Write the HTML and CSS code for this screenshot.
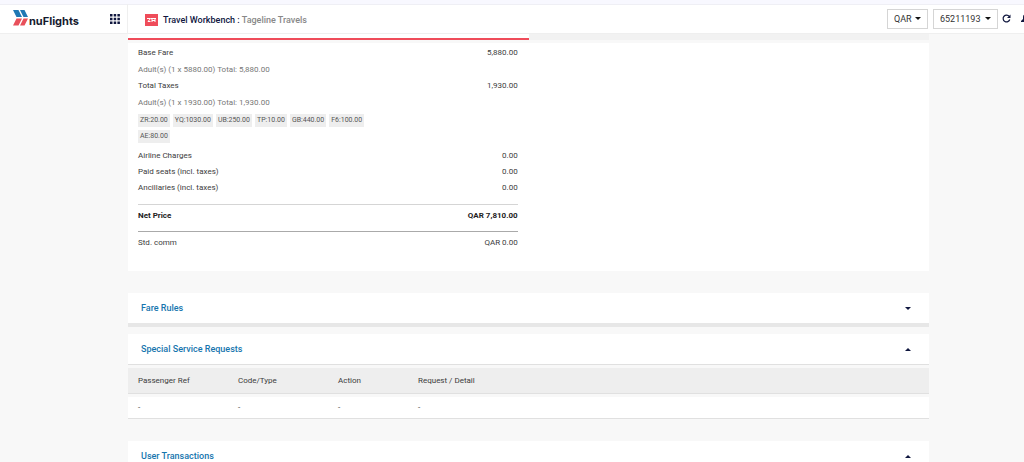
FILE: index.html
```html
<!DOCTYPE html>
<html lang="en">
<head>
<meta charset="utf-8">
<title>nuFlights - Travel Workbench</title>
<link rel="stylesheet" href="styles.css">
</head>
<body>
<div class="app">
  <header class="topbar">
    <div class="brand">
      <a class="logo" href="#" aria-label="nuFlights">
        <svg class="logo-mark" viewBox="0 0 15 16" aria-hidden="true">
          <path fill="#1f78b4" d="M0 0h5.500l3.500 7H3.500zM7 0h4.500L15 7h-4.500z"/>
          <path fill="#e8505b" d="M3.500 8.500H9L5.500 15.500H0zM10.500 8.500H15L11.500 15.500H7z"/>
        </svg>
        <span class="logo-text">nuFlights</span>
      </a>
      <button class="icon-button" type="button" aria-label="Apps">
        <svg class="apps-icon" viewBox="0 0 10 10" aria-hidden="true">
          <path fill="#10173f" d="M0 0h2.500v2.500H0zM3.700 0h2.500v2.500H3.700zM7.400 0h2.500v2.500H7.400zM0 3.700h2.500v2.500H0zM3.700 3.700h2.500v2.500H3.700zM7.400 3.700h2.500v2.500H7.400zM0 7.400h2.500v2.500H0zM3.700 7.400h2.500v2.500H3.700zM7.400 7.400h2.500v2.500H7.400z"/>
        </svg>
      </button>
    </div>
    <div class="titlebar">
      <svg class="title-icon" viewBox="0 0 13 12" aria-hidden="true">
        <rect width="13" height="12" fill="#ef4c5a"/>
        <path d="M2 4.500h3.500L3 7.500h2.500M6 4.500h5M7 4.500v3.500M10 4.500v3.500M7 6.500h3" fill="none" stroke="#fff"/>
      </svg>
      <h1 class="title">Travel Workbench : <span class="agency">Tageline Travels</span></h1>
    </div>
    <div class="tools">
      <div class="pickers">
        <span class="picker picker-currency">
          <select aria-label="Currency"><option>QAR</option></select>
        </span>
        <span class="picker picker-account">
          <select aria-label="Account"><option>65211193</option></select>
        </span>
      </div>
      <div class="actions">
        <button class="icon-button" type="button" aria-label="Refresh">
          <svg class="tool-icon" viewBox="0 0 9 9" aria-hidden="true">
            <path d="M7.300 2.500A3.400 3.400 0 1 0 7.800 5.500" fill="none" stroke="#10173f" stroke-width="1.200"/>
            <path d="M8.500 .5v3.500H5z" fill="#10173f"/>
          </svg>
        </button>
        <button class="icon-button" type="button" aria-label="Notifications">
          <svg class="tool-icon" viewBox="0 0 9 9" aria-hidden="true">
            <path d="M0 8V7L2 5V3a2.500 2.500 0 0 1 5 0v2l2 2v1z" fill="#10173f"/>
          </svg>
        </button>
      </div>
    </div>
  </header>

  <main class="content">
    <div class="tabs"><span class="tab tab-active"></span><span class="tab"></span></div>

    <section class="fare">
      <div class="fare-details">
        <div class="row"><span>Base Fare</span><span>5,880.00</span></div>
        <p class="breakdown">Adult(s) (1 x 5880.00) Total: 5,880.00</p>
        <div class="row"><span>Total Taxes</span><span>1,930.00</span></div>
        <p class="breakdown">Adult(s) (1 x 1930.00) Total: 1,930.00</p>
        <ul class="taxes">
          <li>ZR:20.00</li><li>YQ:1030.00</li><li>UB:250.00</li><li>TP:10.00</li><li>GB:440.00</li><li>F6:100.00</li><li>AE:80.00</li>
        </ul>
        <div class="row"><span>Airline Charges</span><span>0.00</span></div>
        <div class="row"><span>Paid seats (incl. taxes)</span><span>0.00</span></div>
        <div class="row"><span>Ancillaries (incl. taxes)</span><span>0.00</span></div>
        <div class="row net"><span>Net Price</span><span>QAR 7,810.00</span></div>
        <div class="row commission"><span>Std. comm</span><span>QAR 0.00</span></div>
      </div>
    </section>

    <section class="panel closed">
      <h2><button class="panel-toggle" type="button" aria-expanded="false">Fare Rules</button></h2>
    </section>

    <section class="panel">
      <h2><button class="panel-toggle" type="button" aria-expanded="true">Special Service Requests</button></h2>
      <table class="requests">
        <thead>
          <tr><th class="wide">Passenger Ref</th><th class="wide">Code/Type</th><th class="narrow">Action</th><th>Request / Detail</th></tr>
        </thead>
        <tbody>
          <tr class="spacer"><td colspan="4"></td></tr>
          <tr><td>-</td><td>-</td><td>-</td><td>-</td></tr>
        </tbody>
      </table>
    </section>

    <section class="panel">
      <h2><button class="panel-toggle" type="button" aria-expanded="true">User Transactions</button></h2>
    </section>
  </main>
</div>
</body>
</html>
```
FILE: styles.css
```css
* { box-sizing: border-box; }

body {
  margin: 0;
  background: #f8f8f8;
  color: #3c3c3c;
  font: 8px/16px Roboto, sans-serif;
}

h1, h2, p, ul { margin: 0; padding: 0; }

button, select {
  border: 0;
  padding: 0;
  background: none;
  color: inherit;
  font: inherit;
}

.app { height: 100vh; overflow: hidden; }

/* Top bar */
.topbar {
  display: flex;
  height: 34px;
  background: #fff;
  border-top: 4px solid #f8f8ff;
  border-bottom: 1px solid #efefef;
  box-shadow: inset 0 1px #efeff5;
}

.brand {
  display: flex;
  flex: 0 0 128px;
  align-items: center;
  justify-content: space-between;
  padding: 0 7px 0 13px;
  border-right: 1px solid #efefef;
}

.logo {
  display: flex;
  align-items: flex-start;
  gap: 1px;
  color: #151a2e;
  text-decoration: none;
}

.logo-mark { width: 15px; height: 16px; }

.logo-text {
  padding-top: 4px;
  font: 700 11px/14px Inter, sans-serif;
}

.icon-button { display: flex; }
.apps-icon { width: 10px; height: 10px; }
.tool-icon { width: 9px; height: 9px; }

.titlebar {
  display: flex;
  flex: 1;
  align-items: center;
  gap: 5px;
  padding: 2px 0 0 17px;
}

.title-icon { width: 13px; height: 12px; }
.title { color: #10173f; font-size: 9px; font-weight: 500; }
.agency { color: #888; }

.tools {
  display: flex;
  flex-shrink: 0;
  align-items: center;
  gap: 4px;
  margin-right: -6px;
}

.pickers { display: flex; gap: 5px; }
.actions { display: flex; gap: 10px; }
.picker { position: relative; }

.picker select {
  display: block;
  width: 100%;
  height: 20px;
  padding: 0 6px;
  border: 1px solid #d5d5d5;
  color: #333;
  font-size: 9px;
  appearance: none;
}

.picker-currency { width: 41px; }
.picker-account { width: 65px; }

.picker::after {
  content: "";
  position: absolute;
  top: 8px;
  right: 7px;
  border: 3px solid transparent;
  border-top-color: #111;
  border-bottom: 0;
}

/* Page content */
.content { margin: 0 95px 0 128px; }
.tabs { display: flex; height: 6px; margin-bottom: 3px; }
.tab { flex: 1; background: #f2f2f2; }
.tab-active { background: #fff; border-bottom: 2px solid #ef4c5a; }

.fare { padding: 2px 10px 20px; background: #fff; }
.fare-details { width: 49%; padding-right: 3px; }
.row { display: flex; justify-content: space-between; }
.breakdown { color: #777; line-height: 17px; }

.taxes {
  display: flex;
  flex-wrap: wrap;
  gap: 3px;
  width: 240px;
  padding: 3px 0 5px;
  list-style: none;
}

.taxes li {
  padding: 0 2px;
  background: #eee;
  color: #555;
  font-size: 7px;
  line-height: 13px;
}

.net {
  margin: 8px 0 3px;
  padding: 3px 0 7px;
  border-top: 1px solid #d5d5d5;
  border-bottom: 1px solid #aaa;
  color: #222;
  font-weight: 700;
}

/* Collapsible panels */
.panel { margin-top: 22px; }
.panel.closed { border-bottom: 4px solid #e7e7e7; }
.panel.closed + .panel { margin-top: 7px; }

.panel-toggle {
  display: flex;
  align-items: center;
  justify-content: space-between;
  width: 100%;
  height: 30px;
  padding: 0 18px 0 13px;
  background: #fff;
  color: #1675ae;
  font-size: 9px;
  font-weight: 500;
}

.panel-toggle::after {
  content: "";
  border: 3px solid transparent;
  border-top-color: #10173f;
  border-bottom: 0;
}

.panel-toggle[aria-expanded="true"]::after {
  border-top: 0;
  border-bottom: 3px solid #10173f;
}

.requests {
  width: 100%;
  border-top: 1px solid #e0e0e0;
  border-collapse: separate;
  border-spacing: 0;
  table-layout: fixed;
  padding-top: 3px;
}

.requests th, .requests td {
  height: 22px;
  padding: 0 10px;
  border-bottom: 1px solid #e0e0e0;
  background: #fff;
  font-weight: 400;
  text-align: left;
}

.requests th { height: 26px; background: #eee; }
.requests .spacer td { height: 3px; padding: 0; border: 0; background: none; }
.wide { width: 100px; }
.narrow { width: 80px; }
```
